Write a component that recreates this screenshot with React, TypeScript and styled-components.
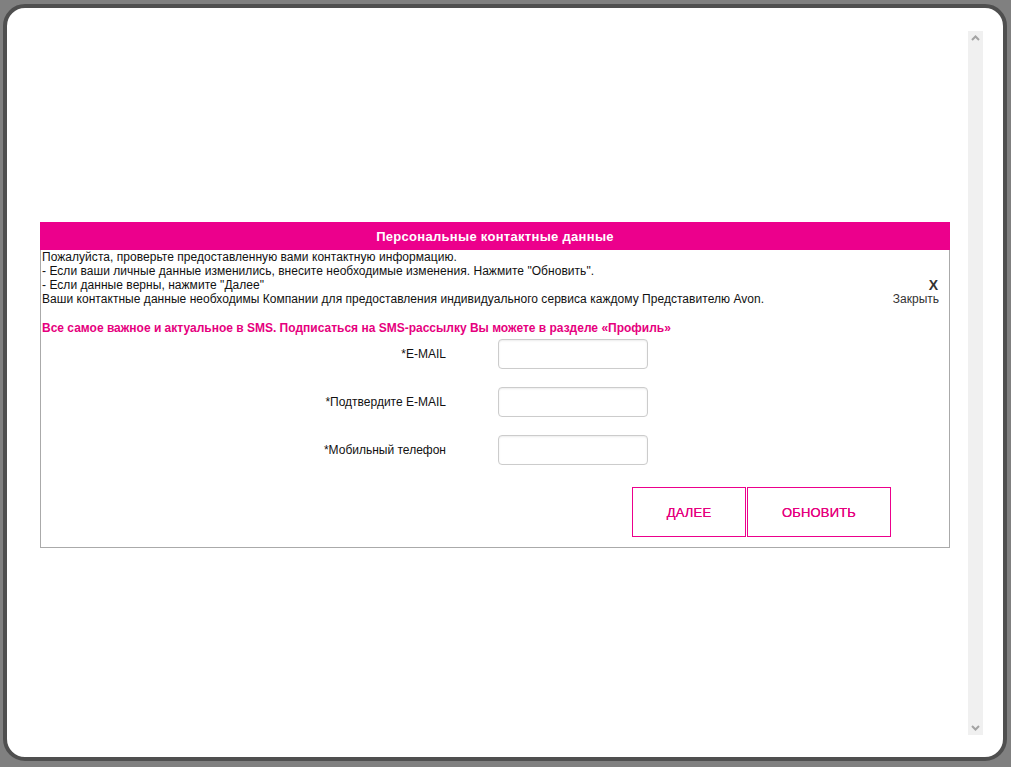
import React from 'react';
import styled, { createGlobalStyle } from 'styled-components';

const GlobalStyle = createGlobalStyle`
  html, body {
    margin: 0;
    padding: 0;
    background: #808080;
    font-family: Arial, "Liberation Sans", sans-serif;
  }
`;

const Frame = styled.div`
  box-sizing: border-box;
  margin: 4px 0 0 3px;
  width: 1004px;
  height: 757px;
  border: 4px solid #4f4f4f;
  border-radius: 22px;
  background: #fff;
  display: flex;
  overflow: hidden;
`;

const Content = styled.div`
  flex: 1;
  padding: 214px 17px 0 33px;
`;

const Scrollbar = styled.div`
  width: 15px;
  margin: 23px 20px 22px 0;
  background: #f0f0f0;
  display: flex;
  flex-direction: column;
  justify-content: space-between;
  align-items: center;
  padding: 4px 0;
  box-sizing: border-box;
`;

const Panel = styled.div`
  width: 910px;
  font-size: 12px;
  color: #111;
`;

const Header = styled.div`
  height: 28px;
  background: #ec008c;
  color: #fff;
  font-weight: bold;
  font-size: 13px;
  letter-spacing: 0.3px;
  display: flex;
  align-items: center;
  justify-content: center;
`;

const Body = styled.div`
  border: 1px solid #aaa;
  border-top: none;
  padding: 0 0 10px 1px;
`;

const InfoRow = styled.div`
  display: flex;
  align-items: flex-end;
  justify-content: space-between;
`;

const Info = styled.div`
  line-height: 14px;
  letter-spacing: 0.04px;
`;

const Close = styled.div`
  display: flex;
  flex-direction: column;
  align-items: flex-end;
  margin-right: 10px;
  line-height: 14px;
  color: #333;
  cursor: pointer;
`;

const CloseX = styled.span`
  font-weight: bold;
  font-size: 14px;
  margin-right: 1px;
`;

const Promo = styled.div`
  margin-top: 15px;
  color: #e6007e;
  font-weight: bold;
  line-height: 14px;
`;

const Form = styled.div`
  display: grid;
  grid-template-columns: 404px 150px;
  column-gap: 52px;
  row-gap: 18px;
  align-items: center;
  margin-top: 4px;
`;

const Label = styled.label`
  text-align: right;
`;

const Input = styled.input`
  box-sizing: border-box;
  width: 150px;
  height: 30px;
  border: 1px solid #ccc;
  border-radius: 4px;
  box-shadow: inset 0 1px 2px rgba(0, 0, 0, 0.08);
  outline: none;
`;

const Actions = styled.div`
  display: flex;
  gap: 1px;
  margin: 22px 0 0 590px;
`;

const Button = styled.button<{ $w: number }>`
  box-sizing: border-box;
  width: ${p => p.$w}px;
  height: 50px;
  background: #fff;
  border: 1px solid #ec008c;
  color: #e6007e;
  font-family: Arial, "Liberation Sans", sans-serif;
  font-size: 13px;
  font-weight: 500;
  letter-spacing: 0.2px;
  text-shadow: 0 0 0.4px #e6007e;
  cursor: pointer;
`;

const Arrow = styled.svg`
  width: 9px;
  height: 6px;
`;

const fields = ['*E-MAIL', '*Подтвердите E-MAIL', '*Мобильный телефон'];

export default function App() {
  return (
    <>
      <GlobalStyle />
      <Frame>
        <Content>
          <Panel>
            <Header>Персональные контактные данные</Header>
            <Body>
              <InfoRow>
                <Info>
                  Пожалуйста, проверьте предоставленную вами контактную информацию.
                  <br />- Если ваши личные данные изменились, внесите необходимые изменения. Нажмите "Обновить".
                  <br />- Если данные верны, нажмите "Далее"
                  <br />Ваши контактные данные необходимы Компании для предоставления индивидуального сервиса каждому Представителю Avon.
                </Info>
                <Close>
                  <CloseX>X</CloseX>
                  <span>Закрыть</span>
                </Close>
              </InfoRow>
              <Promo>Все самое важное и актуальное в SMS. Подписаться на SMS-рассылку Вы можете в разделе «Профиль»</Promo>
              <Form>
                {fields.map(f => (
                  <React.Fragment key={f}>
                    <Label>{f}</Label>
                    <Input type="text" />
                  </React.Fragment>
                ))}
              </Form>
              <Actions>
                <Button $w={114}>ДАЛЕЕ</Button>
                <Button $w={144}>ОБНОВИТЬ</Button>
              </Actions>
            </Body>
          </Panel>
        </Content>
        <Scrollbar>
          <Arrow viewBox="0 0 9 6">
            <path d="M1 5 L4.5 1.5 L8 5" stroke="#a3a3a3" strokeWidth="2" fill="none" />
          </Arrow>
          <Arrow viewBox="0 0 9 6">
            <path d="M1 1 L4.5 4.5 L8 1" stroke="#a3a3a3" strokeWidth="2" fill="none" />
          </Arrow>
        </Scrollbar>
      </Frame>
    </>
  );
}
